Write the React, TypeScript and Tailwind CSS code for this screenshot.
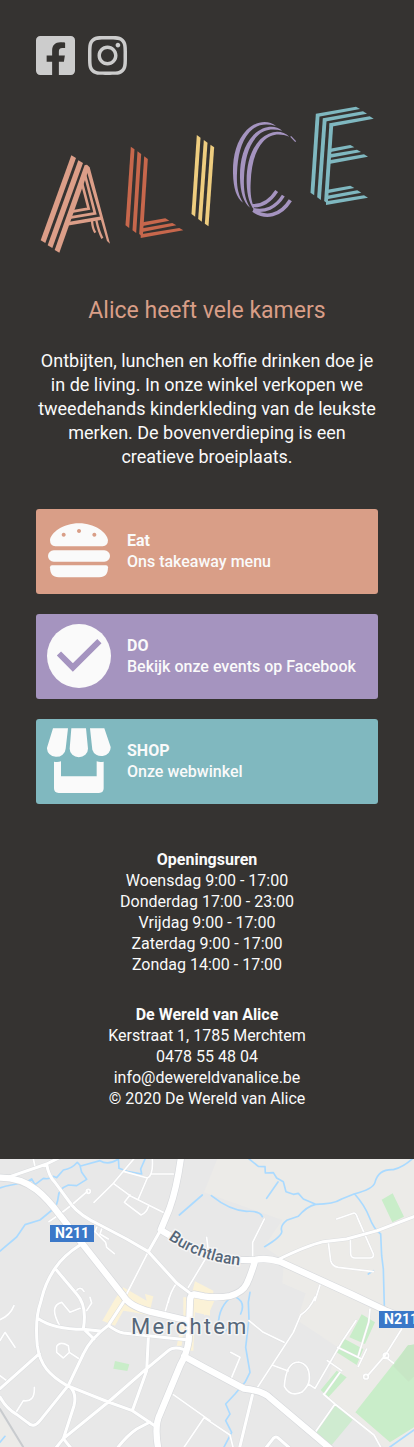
import type { ReactNode } from "react";
import { FaFacebookSquare, FaInstagram } from "react-icons/fa";

/** Upright logo stroke whose ends are cut along a downward slope. */
function Stem({ x1, y1, x2, y2, w = 11 }: { x1: number; y1: number; x2: number; y2: number; w?: number }) {
  const h = w / 2;
  return (
    <polygon
      points={`${x1 - h},${y1 - 4} ${x1 + h},${y1 + 4} ${x2 + h},${y2 + 4} ${x2 - h},${y2 - 4}`}
    />
  );
}

/** Sideways logo stroke that ends in a tapered tip on the right. */
function Arm({ x1, y1, x2, y2 }: { x1: number; y1: number; x2: number; y2: number }) {
  return (
    <polygon points={`${x1},${y1 - 6} ${x2 - 12},${y2 - 5} ${x2},${y2 + 2} ${x1},${y1 + 5}`} />
  );
}

function Logo() {
  return (
    <svg viewBox="18 27 1026 450" className="block w-full" role="img" aria-label="Alice">
      <g fill="#dc9e88" stroke="none">
        <Stem x1={131} y1={185} x2={39} y2={440} w={14} />
        <Stem x1={152} y1={200} x2={60} y2={455} w={14} />
        <Stem x1={171} y1={214} x2={81} y2={469} w={14} />
        <polygon points="165,210 171,209 179,217 240,446 231,438 172,234 166,226" />
        <g fill="none" stroke="#dc9e88">
          <path d="M164 236 195 355 119 368" strokeWidth="8" />
          <path d="M156 264 176 341 125 350" strokeWidth="8" />
          <path d="M110 387 216 369" strokeWidth="10" />
          <path d="M186 378Q188 402 196 413M199 376Q206 410 217 430" strokeWidth="7" />
        </g>
      </g>
      <g fill="#c7674c">
        <Stem x1={308} y1={159} x2={292} y2={395} />
        <Stem x1={328} y1={173} x2={313} y2={410} />
        <Stem x1={348} y1={188} x2={333} y2={421} />
        <Arm x1={338} y1={388} x2={418} y2={375} />
        <Arm x1={337} y1={406} x2={439} y2={389} />
        <Arm x1={332} y1={424} x2={460} y2={404} />
      </g>
      <g fill="#eecd7f">
        <Stem x1={506} y1={124} x2={490} y2={361} />
        <Stem x1={527} y1={139} x2={510} y2={376} />
        <Stem x1={547} y1={153} x2={530} y2={390} />
      </g>
      <g transform="translate(510 0)">
        <g fill="#a594c0">
          <path d="M228 93C205 75 170 77 140 105C108 139 98 185 99 235C100 280 110 310 129 323C115 300 109 275 111 235C113 185 122 142 148 112C170 87 198 85 228 93Z" />
          <path d="M247 107C225 89 191 91 161 119C129 153 119 199 120 249C121 290 130 322 150 338C136 314 130 288 132 249C134 199 143 156 169 126C191 101 217 100 247 107Z" />
          <path d="M268 125C245 103 211 105 181 133C149 167 139 213 140 263C141 304 149 330 166 347C155 324 150 300 152 263C154 213 163 170 189 140C211 115 240 114 268 125Z" />
        </g>
        <g fill="none" stroke="#a594c0" strokeWidth="11">
          <path d="M230 288C208 322 185 334 156 332" strokeWidth="10" />
          <path d="M250 302C228 338 194 352 160 344" strokeWidth="10" />
          <path d="M271 316C241 364 196 372 160 346" />
          <path d="M272 124 287 140" strokeWidth="4" />
        </g>
        <g fill="#7fb8c0">
          <Stem x1={353} y1={60} x2={337} y2={297} />
          <Stem x1={374} y1={74} x2={357} y2={311} />
          <Stem x1={394} y1={88} x2={378} y2={322} />
          <Arm x1={348} y1={62} x2={480} y2={40} />
          <Arm x1={369} y1={76} x2={501} y2={54} />
          <Arm x1={389} y1={91} x2={521} y2={69} />
          <Arm x1={389} y1={167} x2={463} y2={155} />
          <Arm x1={388} y1={184} x2={483} y2={169} />
          <Arm x1={387} y1={202} x2={504} y2={183} />
          <Arm x1={382} y1={290} x2={463} y2={277} />
          <Arm x1={381} y1={308} x2={484} y2={291} />
          <Arm x1={378} y1={325} x2={504} y2={306} />
        </g>
      </g>
    </svg>
  );
}

function BurgerIcon() {
  return (
    <svg viewBox="54 71 186 164" className="block w-[62px]" fill="#fafafa" aria-hidden="true">
      <path
        fillRule="evenodd"
        d="M76 141Q60 139 60 122C62 102 98 72 147 72S232 102 234 122Q234 139 218 141ZM101 100a6 6 0 1 0 .1 0ZM147 89a6 6 0 1 0 .1 0ZM193 100a6 6 0 1 0 .1 0Z"
      />
      <rect x="54" y="153" width="186" height="34" rx="17" />
      <path d="M66 198H228Q234 198 234 204C234 224 226 234 208 234H86C68 234 60 224 60 204Q60 198 66 198Z" />
    </svg>
  );
}

function CheckIcon() {
  return (
    <svg viewBox="51 40 193 193" className="block w-16" aria-hidden="true">
      <circle cx="147.500" cy="136.500" r="96.500" fill="#fafafa" />
      <path d="M87 129 129 171 209 92" fill="none" stroke="#a594c0" strokeWidth="18" />
    </svg>
  );
}

function ShopIcon() {
  return (
    <svg viewBox="51 353 192 196" className="block w-16" fill="#fafafa" aria-hidden="true">
      <path d="M69 354H114L107 415A27 25 0 0 1 51 412ZM124 354H168L174 415A27 25 0 0 1 119 415ZM180 354H223L242 410A28 26 0 0 1 187 418Z" />
      <path d="M72 454Q83 457 93 453V498H200V453Q210 457 221 454V534Q221 548 207 548H86Q72 548 72 534Z" />
    </svg>
  );
}

function Card({ color, icon, title, text }: { color: string; icon: ReactNode; title: string; text: string }) {
  return (
    <a href="#" className={`flex h-[85px] items-center gap-4 rounded-[3px] pb-0.5 pl-[11px] text-[#fafafa] ${color}`}>
      <span className="flex w-16 shrink-0 justify-center">{icon}</span>
      <span className="text-base leading-[21px] font-medium">
        <strong className="block font-bold">{title}</strong>
        {text}
      </span>
    </a>
  );
}

const hours = [
  "Woensdag 9:00 - 17:00",
  "Donderdag 17:00 - 23:00",
  "Vrijdag 9:00 - 17:00",
  "Zaterdag 9:00 - 17:00",
  "Zondag 14:00 - 17:00",
];

const mainRoads =
  "M0 56C90 55 140 115 182 172L370 410Q385 440 450 458L570 486M543 -5Q530 90 508 150L482 213Q560 260 612 285Q690 306 762 303Q800 295 840 308L1052 405L1160 456 1250 492M766 303Q752 350 740 375T690 411Q650 418 612 412L582 406Q570 408 570 425L566 545Q560 585 540 620L480 765Q462 800 475 870M552 592 612 625 732 689Q790 695 812 718L990 868";
const roads =
  "M30 53 140 15 180 -5M140 15Q145 50 165 70L215 138Q240 170 300 198L380 240 445 278 530 372 572 404M482 213 445 278M240 258Q190 290 165 328C130 380 128 410 122 430Q104 480 112 560C120 620 150 650 200 679L325 729 395 754 462 799M165 328 230 405Q262 440 250 509M115 479Q160 510 250 511L300 516M370 430 325 499Q270 540 250 585L205 679 120 785Q100 810 82 790L50 766Q20 750 0 714M0 689 118 584M325 499Q350 518 370 522L500 536 560 542M250 509 282 540M550 571Q520 562 505 575L440 629 325 729 190 839 165 870M445 536 440 635 398 752M205 679Q232 700 222 740L190 839 215 870M350 870Q380 830 410 810L450 789M757 709 718 870M832 303Q920 260 970 248L1040 240 1132 215 1250 170M795 870 820 838Q828 830 836 838L870 868";
const lanes =
  "M100 0 105 22M147 188 180 165 215 138 262 97M259 97a6 6 0 1 0 12 0a6 6 0 1 0 -12 0M403 -2 370 37 340 73 282 130M370 37 442 57 415 120M340 73 390 110 495 163M390 108 373 130 423 168Q440 160 445 143M442 57Q460 50 457 0M457 45H520M445 278 380 405M620 235 625 275M625 285 565 385M530 372Q510 400 505 430M290 205 285 218 317 250 320 265 343 284M305 210 300 225 325 240M227 398Q240 378 252 397M793 180 758 250V300M1010 180 1062 162Q1068 162 1072 175L1120 285Q1122 297 1110 297H1065Q1053 297 1052 285L1051 238M985 250 992 305Q997 322 1015 325L1120 338M960 378 945 425M945 414Q930 450 902 468L880 520 757 709M747 485 790 520 852 550M816 618 865 636M895 609Q930 615 928 660Q928 680 905 700Q870 715 853 682Q858 610 895 609M925 675 945 688 1028 545 1068 485M982 605 1025 635M1013 565 1085 600M1110 450 1106 490 1075 590M1100 570 1075 622M1205 510 1155 590 1103 650M1150 590a8 8 0 1 0 16 0a8 8 0 1 0 -16 0M1091 653a7 7 0 1 0 14 0a7 7 0 1 0 -14 0M1158 595 1180 612M970 705 1005 735 1122 828 1145 870M1005 735 942 825M1020 640 973 705M180 502Q145 440 185 430L210 460 240 448M260 455 275 432 270 415M170 562Q180 545 205 560L208 580 190 597 170 580ZM208 580 238 600M0 482Q30 470 42 440M0 545 15 520 45 565M45 765 70 725Q105 730 103 685M0 650 20 665M508 415 492 470M520 707 630 785M612 776 550 868M692 580 720 595 695 655M612 776 690 828 700 868";
const water =
  "M0 87Q30 76 75 72L95 60 105 77 130 58Q150 62 160 52L170 56 190 33Q215 30 232 10L242 21 300 5Q325 20 355 0M240 20 245 40 260 61 230 80 205 78Q175 90 175 113Q172 140 160 150L120 183 75 197 50 234 0 276M355 -2 357 28 385 38 425 45 422 30 436 -2M538 168 607 108M745 -2 775 22 795 23 796 42 820 41 830 57 850 68 858 98 880 106 895 103 910 120 947 136Q1000 136 1025 120L1062 105Q1120 90 1125 70Q1135 30 1180 32Q1210 25 1242 -5M947 136Q920 142 895 172L860 184Q840 200 845 215T794 263M834 69 800 118M634 110Q690 155 740 157 780 155 787 173M1064 105Q1095 140 1108 175T1142 225L1145 290 1150 330 1153 440M750 400 745 430 747 480 737 565 750 640 735 670 705 705 677 735 690 765 677 785 695 820 670 868M700 410Q655 440 655 500Q670 535 685 505M707 414Q738 430 722 465M1105 345 1120 335M1170 864 1242 813M0 850 15 832";

function MapView() {
  return (
    <svg
      viewBox="0 0 414 288"
      preserveAspectRatio="xMidYMid slice"
      className="block h-72 w-full bg-[#e8e8e8] font-['Roboto',sans-serif]"
      role="img"
      aria-label="Kaart van Merchtem"
    >
      <g transform="scale(.33333)" strokeLinejoin="round" strokeLinecap="round">
        <path
          fill="#ecebe8"
          d="M652 0 612 100 847 183 792 263 852 303 847 373 917 403 892 484 1012 564 972 704 1062 784 1152 864H1242V0ZM0 760 65 864H0Z"
        />
        <path
          fill="#fbf2d7"
          d="M345 420 370 385 440 425 435 405 460 412 450 455 550 475V415H595L630 400V470L585 460 580 575H565L548 480 530 560H545L555 490 400 460 370 455 345 500 307 485ZM585 367 640 395V425H570ZM612 410H650L630 455 612 470Z"
        />
        <path
          fill="#c9edc9"
          d="M345 606 388 616 382 636 340 629ZM1145 122 1178 103 1212 173 1177 190ZM1085 466 1125 490 1095 555 1048 535ZM1030 538 1090 570 1070 618 1010 580ZM1010 635 1040 655 985 715 962 693ZM1225 558H1242V805L1170 850 1066 760Z"
        />
        <path fill="#c7e6c5" d="M1242 556 1222 560 1180 622 1226 668 1242 652Z" />
        <path fill="#cfebd0" d="M1005 733 1060 780 990 864 942 825Z" />
        <path fill="none" stroke="#c8cbce" strokeWidth="6" d="M0 750 72 868" />
        <g fill="none">
          <path d={water} stroke="#aadaff" strokeWidth="5" />
          <path d={lanes} stroke="#e0e1e3" strokeWidth="7" />
          <path d={lanes} stroke="#fff" strokeWidth="5" />
          <path d={roads} stroke="#dcdee0" strokeWidth="12" />
          <path d={mainRoads} stroke="#d8dadd" strokeWidth="23" />
          <path d={roads} stroke="#fff" strokeWidth="9" />
          <path d={mainRoads} stroke="#fff" strokeWidth="19" />
        </g>
      </g>
      <path id="burchtlaan" fill="none" d="M168 80Q204 106 252 107" />
      <g fill="#566779" stroke="#f4f4f4" strokeWidth="3" paintOrder="stroke" strokeLinejoin="round">
        <text className="text-[16px] font-medium">
          <textPath href="#burchtlaan">Burchtlaan</textPath>
        </text>
        <text x="131" y="175" className="text-[22px] tracking-widest">
          Merchtem
        </text>
      </g>
      <g className="text-[14px] font-bold">
        <rect x="50" y="66" width="44" height="17" fill="#3b78c8" />
        <text x="72" y="79" textAnchor="middle" fill="#fff">
          N211
        </text>
        <rect x="379" y="152" width="44" height="17" fill="#3b78c8" />
        <text x="401" y="165" textAnchor="middle" fill="#fff">
          N211
        </text>
      </g>
    </svg>
  );
}

export default function App() {
  return (
    <div className="bg-[#353331] font-['Roboto',sans-serif] text-[#fafafa]">
      <div className="px-9 pt-[33px] pb-[50px]">
        <nav className="flex gap-[13px] text-[#cccccc]">
          <a href="#" aria-label="Facebook">
            <FaFacebookSquare className="block h-[45px] w-[39px]" />
          </a>
          <a href="#" aria-label="Instagram">
            <FaInstagram className="block h-[45px] w-[39px]" />
          </a>
        </nav>
        <header className="mt-[26px] text-center">
          <Logo />
          <h1 className="mt-[41px] text-[23px] leading-8 text-[#d99e87]">Alice heeft vele kamers</h1>
          <p className="mt-[22px] text-lg leading-6">
            Ontbijten, lunchen en koffie drinken doe je in de living. In onze winkel verkopen we tweedehands
            kinderkleding van de leukste merken. De bovenverdieping is een creatieve broeiplaats.
          </p>
        </header>
        <main className="mt-10 flex flex-col gap-5">
          <Card color="bg-[#d99e87]" icon={<BurgerIcon />} title="Eat" text="Ons takeaway menu" />
          <Card color="bg-[#a594bf]" icon={<CheckIcon />} title="DO" text="Bekijk onze events op Facebook" />
          <Card color="bg-[#80b8bf]" icon={<ShopIcon />} title="SHOP" text="Onze webwinkel" />
        </main>
        <footer className="mt-[45px] flex flex-col gap-[29px] text-center text-base leading-[21px]">
          <section>
            <h2 className="font-bold">Openingsuren</h2>
            {hours.map((line) => (
              <p key={line}>{line}</p>
            ))}
          </section>
          <address className="not-italic">
            <strong className="block font-bold">De Wereld van Alice</strong>
            <p>Kerstraat 1, 1785 Merchtem</p>
            <p>0478 55 48 04</p>
            <p>
              <a href="mailto:info@dewereldvanalice.be">info@dewereldvanalice.be</a>
            </p>
            <p>© 2020 De Wereld van Alice</p>
          </address>
        </footer>
      </div>
      <MapView />
    </div>
  );
}
